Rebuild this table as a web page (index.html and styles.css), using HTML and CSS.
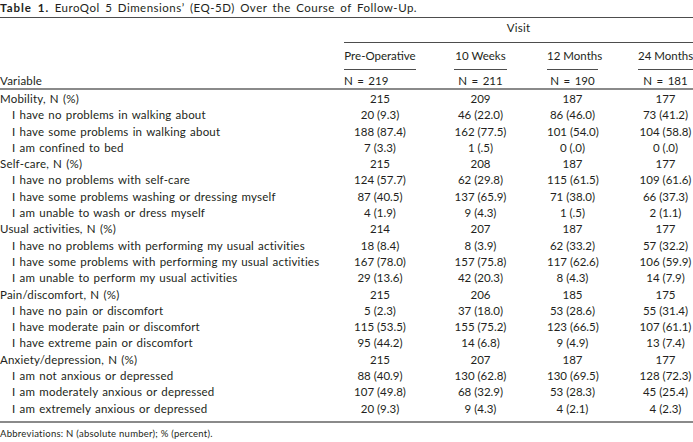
FILE: index.html
```html
<!DOCTYPE html>
<html lang="en">
<head>
<meta charset="utf-8">
<title>Table 1. EuroQol 5 Dimensions' (EQ-5D)</title>
<link rel="stylesheet" href="styles.css">
</head>
<body>
<div class="page">
  <div class="caption"><b>Table 1.</b> EuroQol 5 Dimensions’ (EQ-5D) Over the Course of Follow-Up.</div>
  <table class="eq">
    <colgroup>
      <col class="c-var">
      <col class="c-pre">
      <col class="c-10w">
      <col class="c-12m">
      <col class="c-24m">
    </colgroup>
    <thead>
      <tr class="h-visit">
        <th></th>
        <th colspan="4" class="visit">Visit</th>
      </tr>
      <tr class="h-cols">
        <th></th>
        <th class="gap"><span class="ul">Pre-Operative</span></th>
        <th class="gap"><span class="ul">10 Weeks</span></th>
        <th class="gap"><span class="ul">12 Months</span></th>
        <th class="num-last"><span class="ul">24 Months</span></th>
      </tr>
      <tr class="h-n">
        <th class="var">Variable</th>
        <th class="gap left">N = 219</th>
        <th class="gap">N = 211</th>
        <th class="gap">N = 190</th>
        <th class="num-last">N = 181</th>
      </tr>
    </thead>
    <tbody>
      <tr class="first"><td class="cat">Mobility, N (%)</td><td class="gap">215</td><td class="gap">209</td><td class="gap">187</td><td class="num-last">177</td></tr>
      <tr><td class="item">I have no problems in walking about</td><td class="gap">20 (9.3)</td><td class="gap">46 (22.0)</td><td class="gap">86 (46.0)</td><td class="num-last">73 (41.2)</td></tr>
      <tr><td class="item">I have some problems in walking about</td><td class="gap">188 (87.4)</td><td class="gap">162 (77.5)</td><td class="gap">101 (54.0)</td><td class="num-last">104 (58.8)</td></tr>
      <tr><td class="item">I am confined to bed</td><td class="gap">7 (3.3)</td><td class="gap">1 (.5)</td><td class="gap">0 (.0)</td><td class="num-last">0 (.0)</td></tr>
      <tr><td class="cat">Self-care, N (%)</td><td class="gap">215</td><td class="gap">208</td><td class="gap">187</td><td class="num-last">177</td></tr>
      <tr><td class="item">I have no problems with self-care</td><td class="gap">124 (57.7)</td><td class="gap">62 (29.8)</td><td class="gap">115 (61.5)</td><td class="num-last">109 (61.6)</td></tr>
      <tr><td class="item">I have some problems washing or dressing myself</td><td class="gap">87 (40.5)</td><td class="gap">137 (65.9)</td><td class="gap">71 (38.0)</td><td class="num-last">66 (37.3)</td></tr>
      <tr><td class="item">I am unable to wash or dress myself</td><td class="gap">4 (1.9)</td><td class="gap">9 (4.3)</td><td class="gap">1 (.5)</td><td class="num-last">2 (1.1)</td></tr>
      <tr><td class="cat">Usual activities, N (%)</td><td class="gap">214</td><td class="gap">207</td><td class="gap">187</td><td class="num-last">177</td></tr>
      <tr><td class="item">I have no problems with performing my usual activities</td><td class="gap">18 (8.4)</td><td class="gap">8 (3.9)</td><td class="gap">62 (33.2)</td><td class="num-last">57 (32.2)</td></tr>
      <tr><td class="item">I have some problems with performing my usual activities</td><td class="gap">167 (78.0)</td><td class="gap">157 (75.8)</td><td class="gap">117 (62.6)</td><td class="num-last">106 (59.9)</td></tr>
      <tr><td class="item">I am unable to perform my usual activities</td><td class="gap">29 (13.6)</td><td class="gap">42 (20.3)</td><td class="gap">8 (4.3)</td><td class="num-last">14 (7.9)</td></tr>
      <tr><td class="cat">Pain/discomfort, N (%)</td><td class="gap">215</td><td class="gap">206</td><td class="gap">185</td><td class="num-last">175</td></tr>
      <tr><td class="item">I have no pain or discomfort</td><td class="gap">5 (2.3)</td><td class="gap">37 (18.0)</td><td class="gap">53 (28.6)</td><td class="num-last">55 (31.4)</td></tr>
      <tr><td class="item">I have moderate pain or discomfort</td><td class="gap">115 (53.5)</td><td class="gap">155 (75.2)</td><td class="gap">123 (66.5)</td><td class="num-last">107 (61.1)</td></tr>
      <tr><td class="item">I have extreme pain or discomfort</td><td class="gap">95 (44.2)</td><td class="gap">14 (6.8)</td><td class="gap">9 (4.9)</td><td class="num-last">13 (7.4)</td></tr>
      <tr><td class="cat">Anxiety/depression, N (%)</td><td class="gap">215</td><td class="gap">207</td><td class="gap">187</td><td class="num-last">177</td></tr>
      <tr><td class="item">I am not anxious or depressed</td><td class="gap">88 (40.9)</td><td class="gap">130 (62.8)</td><td class="gap">130 (69.5)</td><td class="num-last">128 (72.3)</td></tr>
      <tr><td class="item">I am moderately anxious or depressed</td><td class="gap">107 (49.8)</td><td class="gap">68 (32.9)</td><td class="gap">53 (28.3)</td><td class="num-last">45 (25.4)</td></tr>
      <tr class="last"><td class="item">I am extremely anxious or depressed</td><td class="gap">20 (9.3)</td><td class="gap">9 (4.3)</td><td class="gap">4 (2.1)</td><td class="num-last">4 (2.3)</td></tr>
    </tbody>
  </table>
  <div class="note">Abbreviations: N (absolute number); % (percent).</div>
</div>
</body>
</html>
```

FILE: styles.css
```css
html, body {
  margin: 0;
  padding: 0;
  background: #ffffff;
}

body {
  font-family: "Lato", "Open Sans", sans-serif;
  color: #231f20;
}

.page {
  width: 693px;
}

.caption {
  font-size: 11.5px;
  line-height: 15px;
  letter-spacing: 0.5px;
  word-spacing: 2px;
  padding-bottom: 2px;
  border-bottom: 1px solid #4d4d4d;
  white-space: nowrap;
}

.caption b {
  font-weight: 700;
  letter-spacing: 1px;
}

.eq {
  width: 693px;
  table-layout: fixed;
  border-collapse: separate;
  border-spacing: 0;
  font-size: 11.5px;
  letter-spacing: 0.2px;
  word-spacing: 1px;
}

.c-var { width: 344px; }
.c-pre { width: 110px; }
.c-10w { width: 93px; }
.c-12m { width: 91px; }
.c-24m { width: 55px; }

.eq th,
.eq td {
  padding: 0;
  font-weight: 400;
  text-align: center;
  white-space: nowrap;
  line-height: 16px;
}

.eq th.gap,
.eq td.gap,
.eq th.num-last,
.eq td.num-last {
  letter-spacing: 0;
  word-spacing: 0;
}

.eq .h-n th.gap,
.eq .h-n th.num-last {
  word-spacing: 1.5px;
}

.eq th.gap,
.eq td.gap {
  padding-right: 40px;
}

.eq th.gap:nth-child(2),
.eq td.gap:nth-child(2) {
  padding-right: 38px;
}

.h-visit th {
  padding-top: 2px;
  padding-bottom: 6px;
}

.h-visit .visit {
  border-bottom: 1px solid #4d4d4d;
}

.h-cols th {
  padding-top: 5px;
}

.ul {
  display: block;
  padding-bottom: 5px;
  border-bottom: 1px solid #4d4d4d;
}

.h-n th {
  padding-top: 4px;
  padding-bottom: 0;
  border-bottom: 2px solid #8a8a8a;
  line-height: 14px;
}

.h-n th.var,
.h-n th.left {
  text-align: left;
}

.eq td {
  line-height: 16.3px;
}

.eq td.cat,
.eq td.item {
  text-align: left;
}

.eq td.item {
  padding-left: 12px;
}

.first td {
  padding-top: 1px;
}

.last td {
  padding-bottom: 4px;
  border-bottom: 2px solid #8a8a8a;
}

.note {
  font-size: 9.5px;
  line-height: 12px;
  letter-spacing: 0.25px;
  margin-top: 5px;
  white-space: nowrap;
}
```
